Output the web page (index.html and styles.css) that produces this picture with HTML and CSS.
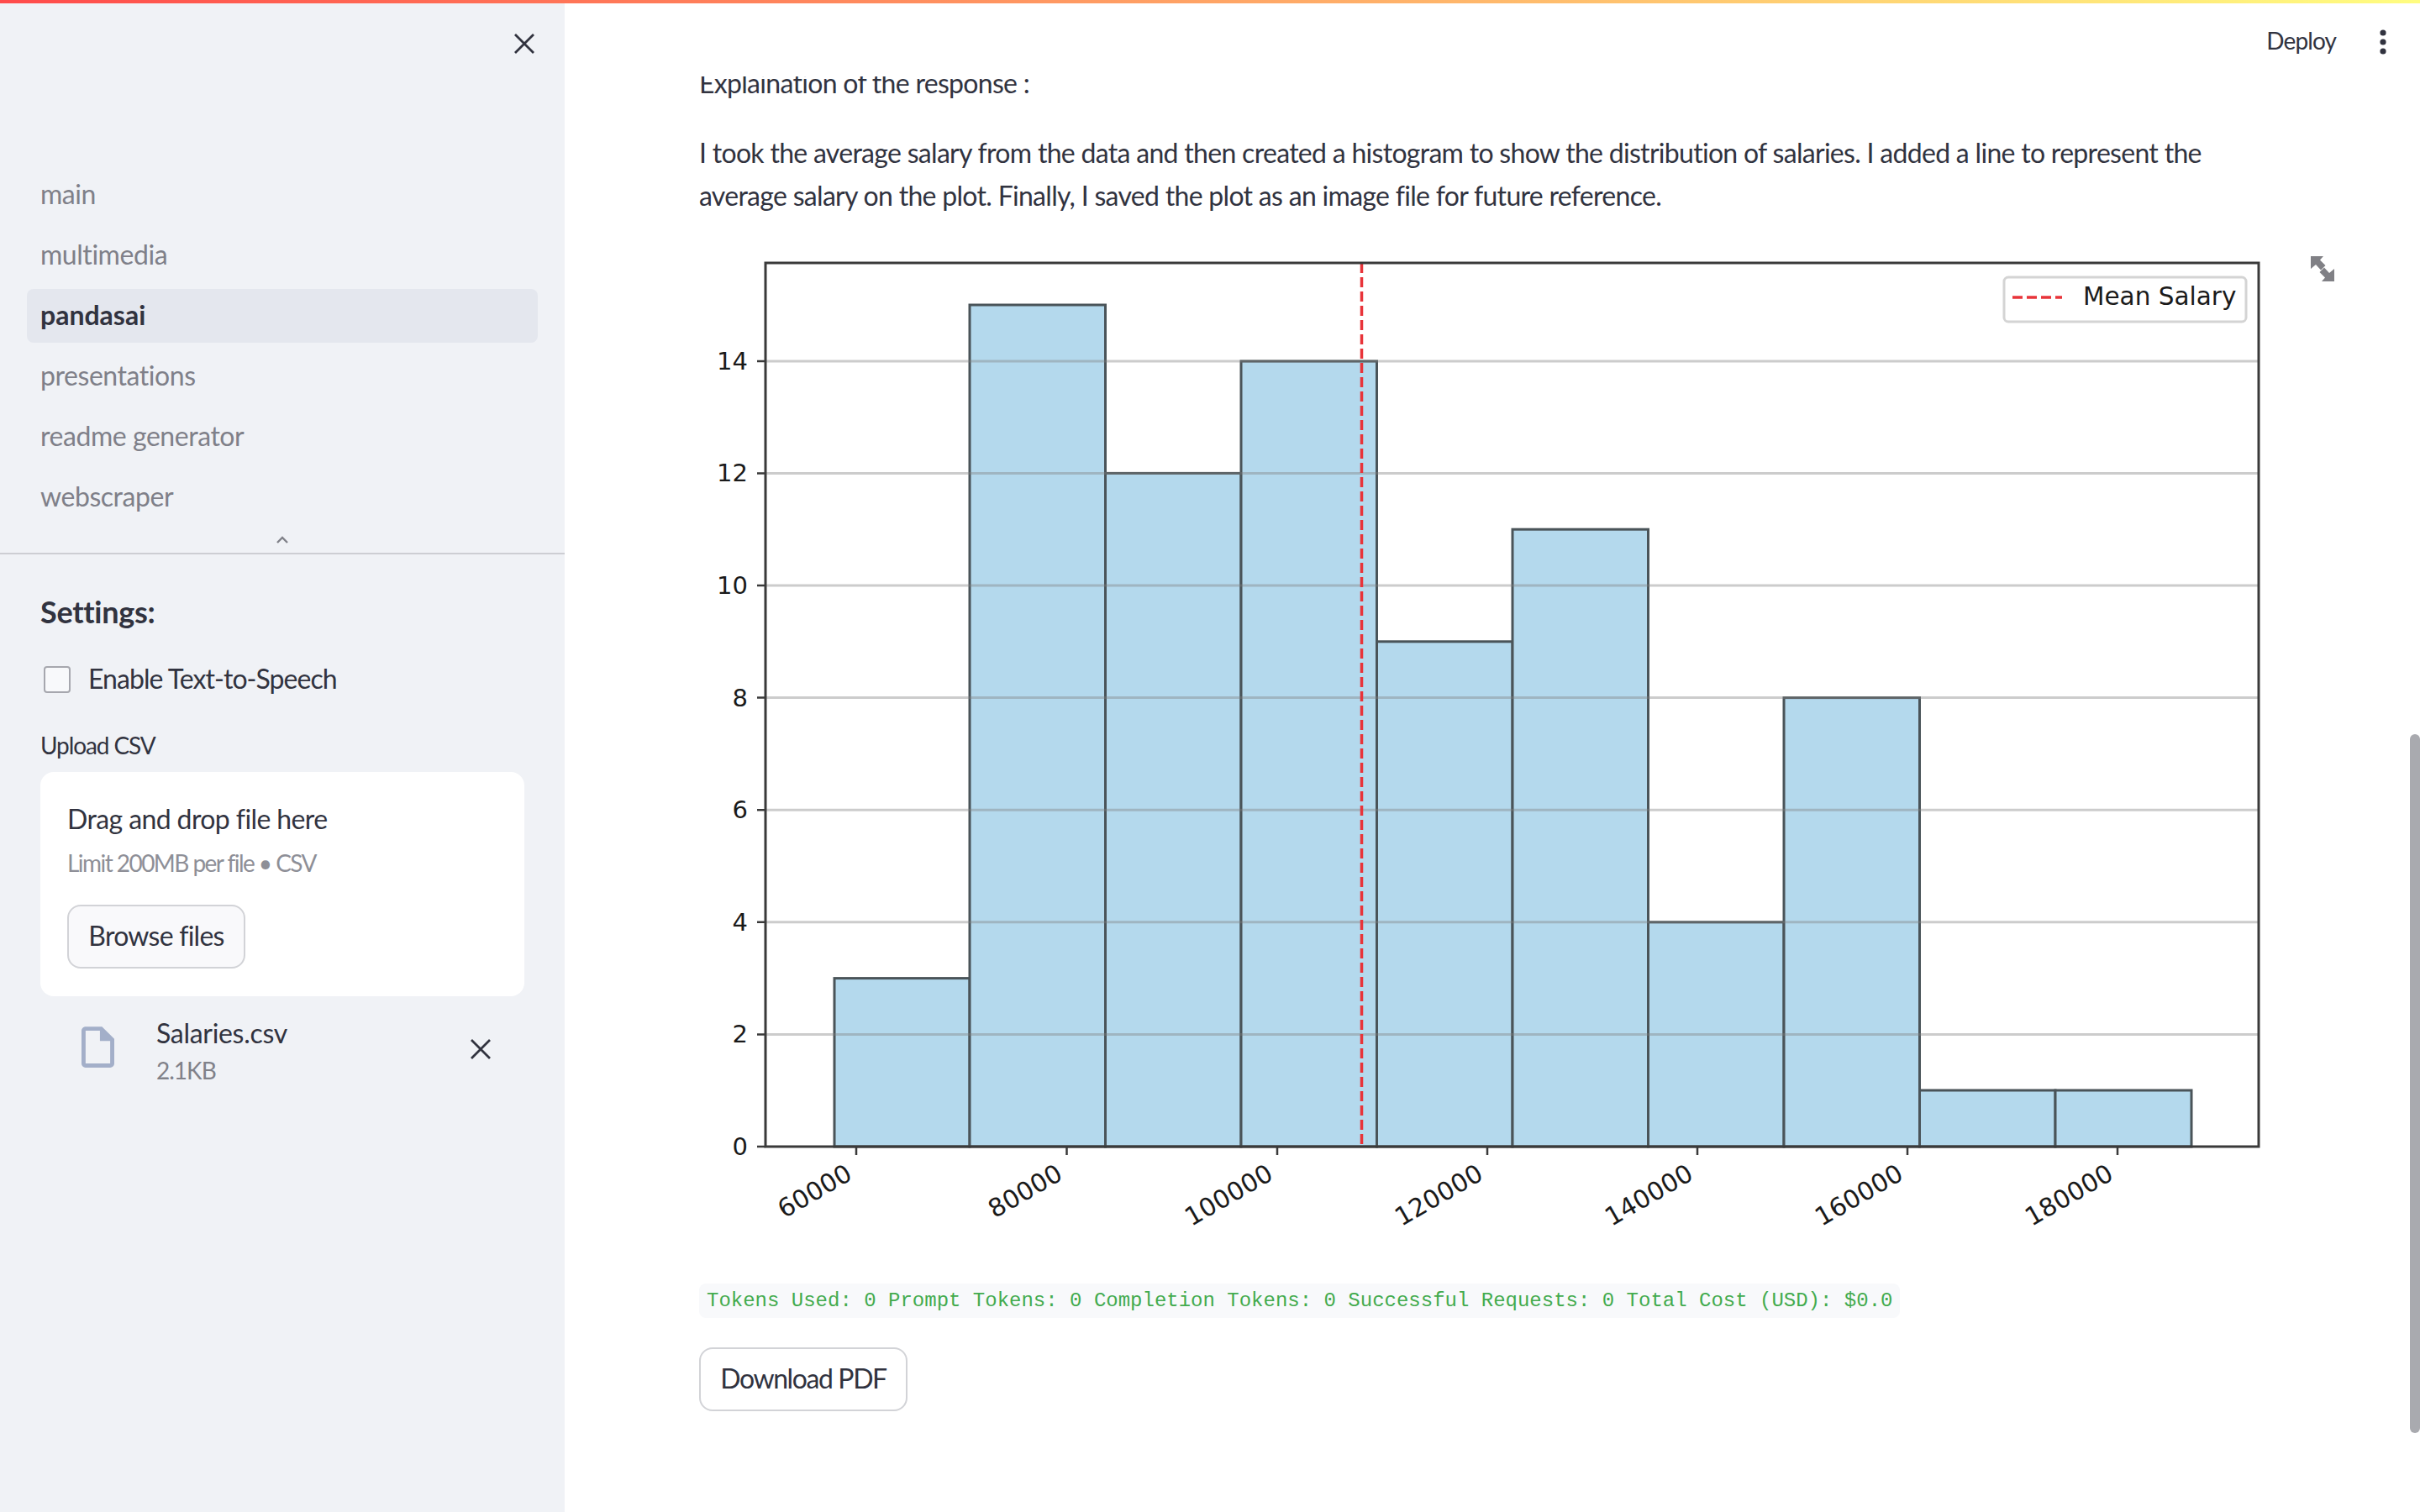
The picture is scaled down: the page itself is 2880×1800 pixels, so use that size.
FILE: index.html
```html
<!DOCTYPE html>
<html lang="en">
<head>
    <meta charset="UTF-8">
    <meta name="viewport" content="width=device-width, initial-scale=1.0">
    <title>pandasai</title>
    <link rel="stylesheet" href="styles.css">
</head>
<body>
    <div class="topbar"></div>
    <div class="app">
        <aside class="sidebar">
            <div class="sidebar-top">
                <svg class="icon-close" viewBox="0 0 24 24"><path d="M1 1L23 23M23 1L1 23"/></svg>
            </div>
            <nav class="nav">
                <a class="nav-item">main</a>
                <a class="nav-item">multimedia</a>
                <a class="nav-item active">pandasai</a>
                <a class="nav-item">presentations</a>
                <a class="nav-item">readme generator</a>
                <a class="nav-item">webscraper</a>
            </nav>
            <div class="nav-toggle">
                <svg class="icon-chevron" viewBox="0 0 16 10"><path d="M2 8L8 2L14 8"/></svg>
            </div>
            <div class="settings">
                <h3>Settings:</h3>
                <label class="check-row"><span class="checkbox"></span><span class="check-text">Enable Text-to-Speech</span></label>
                <div class="upload-label">Upload CSV</div>
                <div class="dropzone">
                    <div class="drop-title">Drag and drop file here</div>
                    <div class="drop-limit">Limit 200MB per file • CSV</div>
                    <button class="btn btn-browse">Browse files</button>
                </div>
                <div class="file-row">
                    <svg class="icon-file" viewBox="4 2 16 20"><path d="M14 2H6c-1.1 0-2 .9-2 2v16c0 1.1.9 2 2 2h12c1.1 0 2-.9 2-2V8l-6-6zM6 20V4h7v5h5v11H6z"/></svg>
                    <div class="file-info">
                        <div class="file-name">Salaries.csv</div>
                        <div class="file-size">2.1KB</div>
                    </div>
                    <svg class="icon-remove" viewBox="0 0 24 24"><path d="M1 1L23 23M23 1L1 23"/></svg>
                </div>
            </div>
        </aside>
        <main class="main">
            <header class="header">
                <span class="deploy">Deploy</span>
                <svg class="icon-dots" viewBox="0 0 8 32"><circle cx="4" cy="5" r="3.6"/><circle cx="4" cy="16" r="3.6"/><circle cx="4" cy="27" r="3.6"/></svg>
            </header>
            <div class="content">
                <p>Explaination of the response :</p>
                <p>I took the average salary from the data and then created a histogram to show the distribution of salaries. I added a line to represent the average salary on the plot. Finally, I saved the plot as an image file for future reference.</p>
                <div class="chart-wrap">
                    <svg class="chart" viewBox="832 300 1960 1227">
                        <g class="bars">
                            <rect x="993" y="1163.6" width="161" height="200.4"/>
                            <rect x="1154" y="362" width="161.5" height="1002"/>
                            <rect x="1315.5" y="562.4" width="161.5" height="801.6"/>
                            <rect x="1477" y="429" width="161.5" height="935"/>
                            <rect x="1638.5" y="762.8" width="161.5" height="601.2"/>
                            <rect x="1800" y="629.2" width="161.5" height="734.8"/>
                            <rect x="1961.5" y="1096.8" width="161.5" height="267.2"/>
                            <rect x="2123" y="829.6" width="161.5" height="534.4"/>
                            <rect x="2284.5" y="1297" width="161.5" height="67"/>
                            <rect x="2446" y="1297" width="162" height="67"/>
                        </g>
                        <g class="grid">
                            <path d="M912 1230.4H2688M912 1096.8H2688M912 963.2H2688M912 829.6H2688M912 696H2688M912 562.4H2688M912 429H2688"/>
                        </g>
                        <path class="mean" d="M1620.5 312V1364"/>
                        <rect class="frame" x="911" y="312" width="1777" height="1052"/>
                        <path class="ticks" d="M901 1364H911M901 1230.4H911M901 1096.8H911M901 963.2H911M901 829.6H911M901 696H911M901 562.4H911M901 429H911M1019 1364V1374M1269.5 1364V1374M1520 1364V1374M1770 1364V1374M2020 1364V1374M2270 1364V1374M2520 1364V1374"/>
                        <g class="y-labels">
                            <text x="890" y="1374">0</text>
                            <text x="890" y="1240.4">2</text>
                            <text x="890" y="1106.8">4</text>
                            <text x="890" y="973.2">6</text>
                            <text x="890" y="839.6">8</text>
                            <text x="890" y="706">10</text>
                            <text x="890" y="572.4">12</text>
                            <text x="890" y="439">14</text>
                        </g>
                        <g class="x-labels">
                            <text transform="translate(1016 1402) rotate(-30)">60000</text>
                            <text transform="translate(1266.5 1402) rotate(-30)">80000</text>
                            <text transform="translate(1517 1402) rotate(-30)">100000</text>
                            <text transform="translate(1767 1402) rotate(-30)">120000</text>
                            <text transform="translate(2017 1402) rotate(-30)">140000</text>
                            <text transform="translate(2267 1402) rotate(-30)">160000</text>
                            <text transform="translate(2517 1402) rotate(-30)">180000</text>
                        </g>
                        <rect class="legend" x="2385" y="329" width="288" height="53" rx="5"/>
                        <path class="mean" d="M2395 353H2454"/>
                        <text class="legend-text" x="2479" y="362">Mean Salary</text>
                    </svg>
                    <svg class="icon-expand" viewBox="0 0 28 30"><path d="M0 0H15L11 4.5L17.5 11L12 16.5L6 10L0 15Z"/><path d="M28 30H13L17 25.5L10.5 19L16 13.5L22 20L28 15Z"/></svg>
                </div>
                <div class="tokens"><code>Tokens Used: 0 Prompt Tokens: 0 Completion Tokens: 0 Successful Requests: 0 Total Cost (USD): $0.0</code></div>
                <button class="btn btn-download">Download PDF</button>
            </div>
            <div class="scrollbar"></div>
        </main>
    </div>
</body>
</html>
```

FILE: styles.css
```css
body {
    margin: 0;
    height: 1800px;
    display: flex;
    flex-direction: column;
    overflow: hidden;
    font-family: "Lato", "Noto Sans", sans-serif;
    font-size: 32px;
    letter-spacing: -0.7px;
    color: #31333f;
    background: white;
}
.topbar {
    height: 4px;
    flex: none;
    background: linear-gradient(90deg, #ff4b4b, #fffd80);
}
.app {
    flex: 1;
    display: flex;
    min-height: 0;
}

/* sidebar */
.sidebar {
    width: 672px;
    flex: none;
    background: #f0f2f6;
}
.sidebar-top {
    height: 196px;
    box-sizing: border-box;
    padding: 36px 36px 0 0;
    display: flex;
    justify-content: flex-end;
    align-items: flex-start;
}
.icon-close, .icon-remove {
    width: 24px;
    height: 24px;
    fill: none;
    stroke: #31333f;
    stroke-width: 2.8;
}
.nav {
    display: flex;
    flex-direction: column;
    gap: 8px;
    padding: 0 32px;
}
.nav-item {
    height: 64px;
    box-sizing: border-box;
    padding: 0 0 3px 16px;
    display: flex;
    align-items: center;
    border-radius: 8px;
    color: #7f8089;
    letter-spacing: -0.45px;
}
.nav-item.active {
    background: #e4e7ee;
    color: #31333f;
    font-weight: 700;
    letter-spacing: 0;
}
.nav-toggle {
    height: 36px;
    box-sizing: border-box;
    padding-top: 14px;
    border-bottom: 2px solid #cdced3;
    display: flex;
    justify-content: center;
}
.icon-chevron {
    width: 16px;
    height: 10px;
    fill: none;
    stroke: #808189;
    stroke-width: 2.4;
}
.settings {
    padding: 0 48px;
}
.settings h3 {
    margin: 0;
    padding-top: 44px;
    font-size: 36px;
    line-height: 48px;
    font-weight: 700;
    letter-spacing: -0.3px;
}
.check-row {
    margin-top: 41px;
    height: 32px;
    display: flex;
    align-items: center;
    gap: 21px;
    letter-spacing: -0.95px;
}
.check-text {
    padding-bottom: 3px;
}
.checkbox {
    width: 32px;
    height: 32px;
    margin-left: 4px;
    box-sizing: border-box;
    background: #f8f9fb;
    border: 2px solid #a6a7ae;
    border-radius: 4px;
}
.upload-label {
    margin-top: 42px;
    font-size: 28px;
    line-height: 40px;
    letter-spacing: -1.1px;
}
.dropzone {
    margin-top: 12px;
    padding: 33px 32px;
    background: white;
    border-radius: 16px;
}
.drop-title {
    line-height: 46px;
    letter-spacing: -0.6px;
}
.drop-limit {
    margin-top: 9px;
    font-size: 28px;
    line-height: 40px;
    letter-spacing: -1.55px;
    color: #8e8f97;
}
.btn {
    display: block;
    height: 76px;
    box-sizing: border-box;
    padding: 0 0 3px;
    border: 2px solid #d2d3d7;
    border-radius: 16px;
    font-family: inherit;
    font-size: 32px;
    color: #31333f;
}
.btn-browse {
    width: 212px;
    margin-top: 30px;
    background: #f9f9fb;
    letter-spacing: -0.76px;
}
.file-row {
    margin-top: 24px;
    padding-left: 49px;
    display: flex;
    align-items: flex-start;
}
.icon-file {
    width: 39px;
    height: 49px;
    margin-top: 12px;
    flex: none;
    fill: #a3afc9;
}
.file-info {
    margin-left: 50px;
}
.file-name {
    line-height: 40px;
    letter-spacing: -0.3px;
}
.file-size {
    margin-top: 4px;
    font-size: 28px;
    line-height: 40px;
    letter-spacing: -1px;
    color: #808189;
}
.icon-remove {
    margin: 27px 40px 0 auto;
}

/* main */
.main {
    flex: 1;
    position: relative;
    overflow: hidden;
}
.header {
    position: absolute;
    top: 0;
    left: 0;
    right: 0;
    height: 87px;
    background: white;
    display: flex;
    justify-content: flex-end;
    align-items: flex-start;
    padding-top: 23px;
    box-sizing: border-box;
}
.deploy {
    font-size: 28px;
    line-height: 42px;
    letter-spacing: -0.9px;
}
.icon-dots {
    width: 8px;
    height: 32px;
    margin: 7px 40px 0 52px;
    fill: #31333f;
}
.content {
    padding: 68.5px 0 0 160px;
}
.content p {
    margin: 0 0 32px;
    width: 1800px;
    line-height: 51px;
}
.chart-wrap {
    position: relative;
    width: 1960px;
    margin-top: 43px;
}
.chart {
    display: block;
    width: 1960px;
    height: 1227px;
}
.bars rect {
    fill: #b4d9ed;
    stroke: #4a5459;
    stroke-width: 3;
}
.grid path {
    fill: none;
    stroke: rgba(128, 128, 128, 0.4);
    stroke-width: 3;
}
.mean {
    fill: none;
    stroke: #e8343a;
    stroke-width: 3.5;
    stroke-dasharray: 12 5;
}
.frame {
    fill: none;
    stroke: #3a3a3a;
    stroke-width: 3;
}
.ticks {
    fill: none;
    stroke: #3a3a3a;
    stroke-width: 2.5;
}
.chart text {
    font-family: "DejaVu Sans", sans-serif;
    font-size: 29px;
    letter-spacing: 0;
    fill: #1a1a1a;
}
.chart .x-labels text {
    font-size: 30px;
}
.chart .legend-text {
    font-size: 29.5px;
}
.y-labels text, .x-labels text {
    text-anchor: end;
}
.legend {
    fill: white;
    stroke: #d4d4d4;
    stroke-width: 3;
}
.icon-expand {
    position: absolute;
    top: 4px;
    left: 1918px;
    width: 28px;
    height: 30px;
    fill: #808085;
}
.tokens {
    display: inline-block;
    vertical-align: top;
    padding: 0 9px;
    background: #f8f9fb;
    border-radius: 8px;
}
.tokens code {
    display: block;
    font-family: "Liberation Mono", monospace;
    font-size: 24px;
    letter-spacing: 0;
    line-height: 41px;
    color: #43ab4e;
}
.btn-download {
    width: 248px;
    margin-top: 35px;
    background: white;
    letter-spacing: -1.4px;
}
.scrollbar {
    position: absolute;
    top: 870px;
    right: 0;
    width: 12px;
    height: 832px;
    background: #a9aaaf;
    border-radius: 6px;
}
```
